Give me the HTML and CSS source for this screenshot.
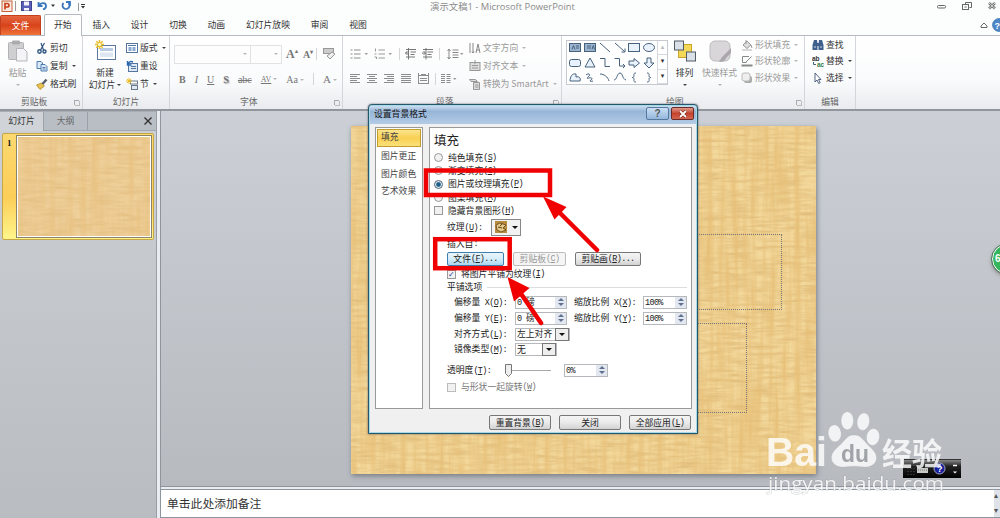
FILE: index.html
```html
<!DOCTYPE html>
<html lang="zh-CN">

<head>
    <meta charset="UTF-8">
    <meta name="viewport" content="width=device-width, initial-scale=1.0">
    <title>演示文稿1 - Microsoft PowerPoint</title>
    <link rel="stylesheet" href="styles.css">
</head>

<body>
    <div class="app">
        <header class="titlebar">
            <div class="quick-access">
                <svg width="86" height="14" viewBox="0 0 86 14">
                    <rect x="2" y="1" width="10" height="10.500" fill="#fbe9df" stroke="#c2623a" />
                    <path d="M5 9.500V3.500h2.200a1.700 1.700 0 0 1 0 3.500H5" fill="none" stroke="#c8401c" stroke-width="1.700" />
                    <path d="M15.500 1v10M78.500 3v8" stroke="#999" />
                    <rect x="21.500" y="1.500" width="10" height="9" fill="#5b5fb5" stroke="#3f4390" />
                    <path d="M24 1.500h5v4h-5zM24 8h5v2.500h-5z" fill="#f3f4fb" />
                    <path d="M38.500 2v4h4M39 5.500c2-3.500 7-3 7 .5 0 2-1.500 3-3 3.500" fill="none" stroke="#3a76bd" stroke-width="1.800" />
                    <path d="M51 4.500h4l-2 2.500zM81 6h4l-2 2.500z" fill="#333" />
                    <path d="M81 4.500h4" stroke="#333" />
                    <path d="M63.500 3a3.500 3.500 0 1 0 5 0M66 2h4v4" fill="none" stroke="#3a76bd" stroke-width="1.800" />
                </svg>
            </div>
            <div class="title">演示文稿1 - Microsoft PowerPoint</div>
            <div class="window-buttons">
                <svg width="64" height="14" viewBox="0 0 64 14" fill="none" stroke="#666">
                    <rect x="1.500" y="5.500" width="8" height="2.500" rx="1" />
                    <path d="M29.500 4.500v-2h6v5h-2" />
                    <rect x="26.500" y="4.500" width="6" height="5" />
                    <path d="M28.500 7h2" />
                    <path d="M53 3l6 5.500M59 3l-6 5.500" stroke-width="2.400" />
                    <path d="M53 3l6 5.500M59 3l-6 5.500" stroke="#fff" stroke-width=".8" />
                </svg>
            </div>
        </header>

        <nav class="tabs">
            <span class="tab file">文件</span>
            <span class="tab active">开始</span>
            <span class="tab">插入</span>
            <span class="tab">设计</span>
            <span class="tab">切换</span>
            <span class="tab">动画</span>
            <span class="tab">幻灯片放映</span>
            <span class="tab">审阅</span>
            <span class="tab">视图</span>
            <svg class="tab-help" width="24" height="18" viewBox="0 0 24 18">
                <path d="M2 10l3-3 3 3v1.500H2z" fill="#fff" stroke="#666" />
                <circle cx="20" cy="9" r="6.500" fill="#4c88c8" stroke="#2f659f" stroke-width=".6" />
                <text x="15.500" y="12.500" font-size="9" font-weight="bold" fill="#fff">?</text>
            </svg>
        </nav>

        <section class="ribbon">
            <div class="group clipboard">
                <div class="group-body">
                    <div class="big disabled">
                        <svg width="22" height="24" viewBox="0 0 22 24">
                            <rect x="1.500" y="3.500" width="15" height="17" rx="1" fill="#cfcfd1" stroke="#b3b3b6" />
                            <rect x="5" y="1.500" width="8" height="4" rx="1" fill="#aaabae" />
                            <path d="M9.500 9.500h7l3.500 3.500v9h-10.500z" fill="#f4f4f6" stroke="#b5b5b9" />
                        </svg>
                        <span>粘贴</span>
                        <i class="arrow"></i>
                    </div>
                    <div class="stack">
                        <div class="item">
                            <svg width="12" height="12" viewBox="0 0 12 12" fill="none" stroke="#2f5482">
                                <path d="M5 1l2.500 7M8.500 1L4.500 8" stroke-width="1.200" />
                                <circle cx="3.500" cy="9.500" r="1.700" stroke-width="1.400" />
                                <circle cx="8.500" cy="9.500" r="1.500" stroke-width="1.400" />
                            </svg>剪切
                        </div>
                        <div class="item">
                            <svg width="12" height="12" viewBox="0 0 12 12" fill="#dcebfa" stroke="#3f6ea5" stroke-width=".9">
                                <path d="M1 1.500h4l1.500 1.500v5.500H1z" />
                                <path d="M5 4.500h4l2 2v4.500H5z" />
                                <path d="M6.500 7.500h3M6.500 9h3" />
                            </svg>复制<i class="arrow"></i>
                        </div>
                        <div class="item">
                            <svg width="12" height="12" viewBox="0 0 12 12">
                                <path d="M.5 7l5-2 3 3L4 11.500z" fill="#eac24f" stroke="#a87c1d" stroke-width=".7" />
                                <path d="M6.500 6L10.500 1.500" stroke="#555e6b" stroke-width="2.400" />
                            </svg>格式刷
                        </div>
                    </div>
                </div>
                <div class="group-label">剪贴板<i class="launcher"></i></div>
            </div>

            <div class="group slides">
                <div class="group-body">
                    <div class="big">
                        <svg width="24" height="24" viewBox="0 0 24 24">
                            <rect x="4.500" y="6.500" width="18" height="14" fill="#fff" stroke="#5d79a3" />
                            <rect x="7" y="9" width="13" height="3" fill="#b9cbe2" />
                            <rect x="7" y="13.500" width="13" height="4.500" fill="#dde6f2" />
                            <path d="M6.500 1v9M2 5.500h9M3.300 2.300l6.400 6.400M9.700 2.300L3.300 8.700" stroke="#e9bd25" stroke-width="1.500" />
                            <circle cx="6.500" cy="5.500" r="1.600" fill="#fffbd6" />
                        </svg>
                        <span>新建</span>
                        <span class="second">幻灯片<i class="arrow"></i></span>
                    </div>
                    <div class="stack">
                        <div class="item">
                            <svg width="12" height="12" viewBox="0 0 12 12">
                                <rect x=".5" y="1.500" width="11" height="9" fill="#fff" stroke="#54759f" />
                                <path d="M2 3.500h8" stroke="#54759f" />
                                <path d="M2.500 5h3v4h-3zM6.500 5h3v4h-3z" fill="#8aa9d0" />
                            </svg>版式<i class="arrow"></i>
                        </div>
                        <div class="item">
                            <svg width="12" height="12" viewBox="0 0 12 12">
                                <rect x="2.500" y="3.500" width="9" height="8" fill="#dfe9f5" stroke="#54759f" />
                                <path d="M5 6.500h5M5 8.500h5" stroke="#54759f" />
                                <path d="M1.500 1v4h4M2 4c1-2.500 3-3 5-2" fill="none" stroke="#2768b0" stroke-width="1.400" />
                            </svg>重设
                        </div>
                        <div class="item">
                            <svg width="12" height="12" viewBox="0 0 12 12">
                                <rect x="4.500" y="3" width="7" height="3" fill="#fff" stroke="#6d7886" />
                                <rect x="5.500" y="7.500" width="6" height="4" fill="#dfe9f5" stroke="#6d7886" />
                                <path d="M3 0v6M0 3h6M1 1l4 4M5 1L1 5" stroke="#e9bd25" />
                            </svg>节<i class="arrow"></i>
                        </div>
                    </div>
                </div>
                <div class="group-label">幻灯片</div>
            </div>

            <div class="group font disabled">
                <div class="group-body rows">
                    <div class="tool-row">
                        <div class="combo family"><i class="arrow"></i></div>
                        <div class="combo size"><i class="arrow"></i></div>
                        <span class="glyph grow">A<sup>▴</sup></span>
                        <span class="glyph shrink">A<sup>▾</sup></span>
                        <i class="sep"></i>
                        <svg class="eraser" width="14" height="14" viewBox="0 0 14 14" fill="#eee" stroke="#999">
                            <rect x="1.500" y="1.500" width="10" height="5" fill="#ccc" />
                            <path d="M5 9l5-4 3 2-5 5z" />
                        </svg>
                    </div>
                    <div class="tool-row letters">
                        <b>B</b><em>I</em><u>U</u><b class="shadow">S</b><s>abc</s>
                        <span class="av">AV<i class="arrow"></i></span>
                        <span class="aa">Aa<i class="arrow"></i></span>
                        <i class="sep"></i>
                        <span class="fc">A<i class="arrow"></i></span>
                    </div>
                </div>
                <div class="group-label">字体<i class="launcher"></i></div>
            </div>

            <div class="group paragraph disabled">
                <div class="group-body">
                    <div class="rows">
                        <div class="tool-row icons">
                            <svg width="20" height="12" viewBox="0 0 20 12"><path d="M4 2h6.500M4 6h6.500M4 10h6.500M.5 2h2M.5 6h2M.5 10h2" stroke="#8d8d8d" stroke-width="1.200" /><path d="M14.500 5h3.500l-1.800 2z" fill="#999" /></svg>
                            <svg class="gap-a" width="20" height="12" viewBox="0 0 20 12"><path d="M4.500 2h6.500M4.500 6h6.500M4.500 10h6.500M1.500 .5v3M.5 6h2M.5 9h2v2" stroke="#999" fill="none" /><path d="M14.500 5h3.500l-1.800 2z" fill="#999" /></svg>
                            <i class="sep"></i>
                            <svg class="gap-b" width="12" height="12" viewBox="0 0 12 12"><path d="M1 1.500h10M5.500 4h5.500M5.500 6.500h4M1 9h9M3.500 0v11.500M4 5H.5M2.500 3l-2 2 2 2" stroke="#777" fill="none" /></svg>
                            <svg class="gap-b" width="12" height="12" viewBox="0 0 12 12"><path d="M1 1.500h10M5.500 4h5.500M5.500 6.500h4M1 9h9M4 0v11.500M0 5h3.500M1.500 3l2 2-2 2" stroke="#777" fill="none" /></svg>
                            <i class="sep gap-b"></i>
                            <svg class="gap-c" width="18" height="12" viewBox="0 0 18 12"><path d="M5.500 2h6M5.500 4.500h6M5.500 7h6M5.500 9.500h6M2 1v10M.5 3L2 1l1.500 2M.5 9L2 11l1.500-2" stroke="#888" fill="none" /><path d="M13 5h3.500l-1.800 2z" fill="#999" /></svg>
                        </div>
                        <div class="tool-row icons second-row">
                            <svg width="12" height="10" viewBox="0 0 12 10" stroke="#8d8d8d"><path d="M0 .5h10M0 2.500h7M0 4.500h10M0 6.500h7M0 8.500h10" /></svg>
                            <svg width="12" height="10" viewBox="0 0 12 10" stroke="#8d8d8d"><path d="M0 .5h10M2 2.500h6M0 4.500h10M2 6.500h6M0 8.500h10" /></svg>
                            <svg width="12" height="10" viewBox="0 0 12 10" stroke="#8d8d8d"><path d="M0 .5h10M3 2.500h7M0 4.500h10M3 6.500h7M0 8.500h10" /></svg>
                            <svg width="12" height="10" viewBox="0 0 12 10" stroke="#8d8d8d"><path d="M0 .5h10M0 2.500h10M0 4.500h10M0 6.500h10M0 8.500h10" /></svg>
                            <svg width="12" height="12" viewBox="0 0 12 12" stroke="#8d8d8d"><path d="M0 2.500h11M2 5.500h7M2 7.500h7M0 10.500h11M.5 0v11M10.500 0v11M3 1.500h5" /></svg>
                            <i class="sep"></i>
                            <svg width="18" height="10" viewBox="0 0 18 10" stroke="#8d8d8d"><path d="M0 .5h4M0 2.500h4M0 4.500h4M0 6.500h4M0 8.500h4M5.500 .5h4M5.500 2.500h4M5.500 4.500h4M5.500 6.500h4M5.500 8.500h4" /><path d="M12 4h3.500l-1.800 2z" fill="#999" stroke="none" /></svg>
                        </div>
                    </div>
                    <div class="stack">
                        <div class="item">
                            <svg width="12" height="12" viewBox="0 0 12 12" fill="none" stroke="#888"><path d="M1 1v10M4 1v10M7 11l2-9 2 9M7.500 8h3M3 9.500l1 1.500 1-1.500" /></svg>文字方向<i class="arrow"></i>
                        </div>
                        <div class="item">
                            <svg width="12" height="12" viewBox="0 0 12 12" fill="#ddd" stroke="#999"><rect x="1" y="2.500" width="10" height="8" /><path d="M3 5.500h6M3 8h6M6 0v4" /></svg>对齐文本<i class="arrow"></i>
                        </div>
                        <div class="item">
                            <svg width="12" height="12" viewBox="0 0 12 12" fill="#ddd" stroke="#999"><path d="M.5 1.500h6l2 2H2z" /><path d="M4.500 4.500h6v7h-6zM6 7h3.500M6 9h3.500" /></svg>转换为 SmartArt<i class="arrow"></i>
                        </div>
                    </div>
                </div>
                <div class="group-label">段落<i class="launcher"></i></div>
            </div>

            <div class="group drawing">
                <div class="group-body">
                    <div class="gallery">
                        <svg width="90" height="43" viewBox="0 0 90 43" fill="#e9f2fa" stroke="#47627f">
                            <rect x="2.500" y="2.500" width="11" height="8" fill="#9db4cf" />
                            <path d="M5 8.500l1.500-4 1.500 4M9 5h3M9 7h3" fill="none" />
                            <rect x="17.500" y="2.500" width="11" height="8" fill="#9db4cf" />
                            <path d="M20 5h4M20 7h4M25 8.500l1.300-4 1.300 4" fill="none" />
                            <path d="M33 2l10 9M48 2l9.500 8.500M58 7.500v3.500h-3.500" fill="none" />
                            <rect x="61.500" y="2.500" width="11" height="8" />
                            <ellipse cx="82" cy="6.500" rx="5.500" ry="4" />
                            <rect x="2.500" y="18.500" width="11" height="7" rx="2" />
                            <path d="M23 17l5 9H18z" />
                            <path d="M33 17.500h5v8h5M47.500 17.500h5v7.500h5M56 23l2 2-2 2" fill="none" />
                            <path d="M62 20h5v-2.500l5.500 4.500-5.500 4.500V24h-5z" />
                            <path d="M80 17h4v5h3l-5 5-5-5h3z" />
                            <path d="M3 40c0-4 2-8 6-7v3c3-1 5 1 4 4z" />
                            <path d="M19 34c2-2 5-1 3 1s-3 3 0 2 4 1 2 2-1 2 2 1M33 33c4 0 8 3 9 7M47 39c3 0 3-7 6-7s2 6 6 7M69 32c-3 0-2 2-2 3s-1 1.500-2 1.500c1 0 2 .5 2 1.500s-1 3 2 3M80 32c3 0 2 2 2 3s1 1.500 2 1.500c-1 0-2 .5-2 1.500s1 3-2 3" fill="none" />
                        </svg>
                        <div class="gallery-scroll">
                            <span class="off">▴</span>
                            <span>▾</span>
                            <span>▾</span>
                        </div>
                    </div>
                    <div class="big arrange">
                        <svg width="24" height="24" viewBox="0 0 24 24" stroke-width="1">
                            <rect x="5.500" y="5.500" width="13" height="13" fill="#f4d858" stroke="#c9a32a" />
                            <rect x="1.500" y="2" width="9" height="9" fill="#d9e0e8" stroke="#515b66" />
                            <rect x="13.500" y="13" width="9" height="9" fill="#d9e0e8" stroke="#515b66" />
                        </svg>
                        <span>排列</span>
                        <i class="arrow"></i>
                    </div>
                    <div class="big quick disabled">
                        <svg width="24" height="24" viewBox="0 0 24 24">
                            <rect x="2" y="2" width="20" height="20" rx="5" fill="#d9d6da" stroke="#bdb9be" />
                            <path d="M23 9l-9 9-3 5c4 0 6-1 7-4l5-5z" fill="#aaa6ab" />
                        </svg>
                        <span>快速样式</span>
                        <i class="arrow"></i>
                    </div>
                    <div class="stack tight disabled">
                        <div class="item">
                            <svg width="12" height="12" viewBox="0 0 12 12" fill="#ddd" stroke="#999"><path d="M2 6l4-4 4 4-4 3.500zM5 1v4" /><path d="M10 6l1 3" /><path d="M1 11h10" stroke="#ccc" stroke-width="1.500" /></svg>形状填充<i class="arrow"></i>
                        </div>
                        <div class="item">
                            <svg width="12" height="12" viewBox="0 0 12 12" fill="none" stroke="#888"><path d="M8 1.500H1.500v6h4M5 7l5.500-5.500" /><path d="M.5 10.500h11" stroke-width="2" /></svg>形状轮廓<i class="arrow"></i>
                        </div>
                        <div class="item">
                            <svg width="12" height="12" viewBox="0 0 12 12"><rect x="3" y="4" width="8" height="7" rx="2" fill="#aaa" /><rect x="1" y="1" width="8" height="8" rx="2" fill="#eee" stroke="#bbb" /></svg>形状效果<i class="arrow"></i>
                        </div>
                    </div>
                </div>
                <div class="group-label">绘图<i class="launcher"></i></div>
            </div>

            <div class="group editing">
                <div class="group-body">
                    <div class="stack tight">
                        <div class="item">
                            <svg width="12" height="12" viewBox="0 0 12 12" fill="#3f5f8c"><path d="M2 1h3l.5 4v6H.5V6zM7 1h3l1.500 5v5h-5V5z" /><path d="M5 4h2v3H5z" /><path d="M2 8h2M8 8h2" stroke="#cfdced" /></svg>查找
                        </div>
                        <div class="item">
                            <svg width="12" height="12" viewBox="0 0 12 12"><text x="0" y="5.500" font-size="6.500" font-weight="bold" fill="#333">ab</text><text x="5" y="11.500" font-size="6.500" font-weight="bold" fill="#34804a">ac</text><path d="M1.500 7v2.500H4" fill="none" stroke="#47627f" /></svg>替换<i class="arrow"></i>
                        </div>
                        <div class="item">
                            <svg width="12" height="12" viewBox="0 0 12 12"><path d="M3 1v9l2-2 1.700 3.500 1.500-.8L6.500 7.500H9z" fill="#fff" stroke="#3e5576" stroke-width=".9" /></svg>选择<i class="arrow"></i>
                        </div>
                    </div>
                </div>
                <div class="group-label">编辑</div>
            </div>
        </section>

        <main class="workspace">
            <aside class="sidebar">
                <div class="side-tabs">
                    <span class="side-tab current">幻灯片</span>
                    <span class="side-tab">大纲</span>
                    <svg class="side-close" width="10" height="10" viewBox="0 0 10 10"><path d="M1.500 1.500l7 7M8.500 1.500l-7 7" stroke="#333" stroke-width="1.400" /></svg>
                </div>
                <div class="thumb">
                    <b class="thumb-number">1</b>
                    <div class="thumb-slide">
                        <svg width="100%" height="100%">
                            <rect width="100%" height="100%" filter="url(#weft)" />
                            <rect width="100%" height="100%" filter="url(#warp)" />
                        </svg>
                    </div>
                </div>
            </aside>
            <div class="editor">
                <div class="canvas">
                    <div class="slide">
                        <svg class="fabric" width="465" height="348">
                            <defs>
                                <filter id="weft" x="0" y="0" width="100%" height="100%" color-interpolation-filters="sRGB">
                                    <feTurbulence type="fractalNoise" baseFrequency="0.04 0.3" numOctaves="3" seed="4" />
                                    <feColorMatrix values="0 0 0 0 .80  0 0 0 0 .62  0 0 0 0 .34  1.800 0 0 0 -.62" />
                                </filter>
                                <filter id="warp" x="0" y="0" width="100%" height="100%" color-interpolation-filters="sRGB">
                                    <feTurbulence type="fractalNoise" baseFrequency="0.16 0.012" numOctaves="3" seed="9" />
                                    <feColorMatrix values="0 0 0 0 .86  0 0 0 0 .66  0 0 0 0 .34  2 0 0 0 -.72" />
                                </filter>
                            </defs>
                            <rect width="465" height="348" filter="url(#weft)" />
                            <rect width="465" height="348" filter="url(#warp)" />
                        </svg>
                        <div class="placeholder heading"></div>
                        <div class="placeholder subtitle"></div>
                    </div>
                </div>
                <div class="notes">
                    <span>单击此处添加备注</span>
                    <div class="notes-scroll"><i>▴</i><i>▾</i></div>
                </div>
            </div>
        </main>

        <div class="dialog">
            <div class="dialog-title">
                <span>设置背景格式</span>
                <div class="dialog-buttons">
                    <b class="help">?</b>
                    <b class="close">
                        <svg width="10" height="8" viewBox="0 0 10 8"><path d="M2 1l6 6M8 1L2 7" stroke="#6d2018" stroke-width="3" /><path d="M2 1l6 6M8 1L2 7" stroke="#fff" stroke-width="1.800" /></svg>
                    </b>
                </div>
            </div>
            <div class="dialog-body">
                <ul class="pages">
                    <li class="selected">填充</li>
                    <li>图片更正</li>
                    <li>图片颜色</li>
                    <li>艺术效果</li>
                </ul>
                <div class="panel">
                    <h2>填充</h2>
                    <div class="option"><i class="radio"></i>纯色填充<kbd>(<u>S</u>)</kbd></div>
                    <div class="option"><i class="radio"></i>渐变填充<kbd>(<u>G</u>)</kbd></div>
                    <div class="option"><i class="radio on"></i>图片或纹理填充<kbd>(<u>P</u>)</kbd></div>
                    <div class="option"><i class="radio"></i>图案填充<kbd>(<u>A</u>)</kbd></div>
                    <div class="option"><i class="check"></i>隐藏背景图形<kbd>(<u>H</u>)</kbd></div>
                    <div class="line texture">
                        <span>纹理<kbd>(<u>U</u>):</kbd></span>
                        <div class="texture-button">
                            <svg width="12" height="12" viewBox="0 0 12 12"><rect width="12" height="12" fill="#b98b3f" /><path d="M1 4l4-2 6 2-3 3 3 2-5 2-4-2z" fill="#e6c887" stroke="#5b431c" stroke-width=".8" /><path d="M3 6l4 1M7 3L5 5" stroke="#5b431c" /></svg>
                            <i class="arrow"></i>
                        </div>
                    </div>
                    <div class="line insert">插入自<kbd>:</kbd></div>
                    <div class="line sources">
                        <span class="button focus">文件<kbd>(<u>F</u>)...</kbd></span>
                        <span class="button off">剪贴板<kbd>(<u>C</u>)</kbd></span>
                        <span class="button">剪贴画<kbd>(<u>R</u>)...</kbd></span>
                    </div>
                    <div class="line tile"><i class="check on"></i>将图片平铺为纹理<kbd>(<u>I</u>)</kbd></div>
                    <div class="line legend">平铺选项<hr></div>
                    <div class="line offset">
                        <label>偏移量<kbd> X(<u>O</u>):</kbd></label>
                        <div class="spin"><span><kbd>0 </kbd>磅</span><i></i></div>
                        <label class="scale">缩放比例<kbd> X(<u>X</u>):</kbd></label>
                        <div class="spin small"><kbd>100%</kbd><i></i></div>
                    </div>
                    <div class="line offset">
                        <label>偏移量<kbd> Y(<u>E</u>):</kbd></label>
                        <div class="spin"><span><kbd>0 </kbd>磅</span><i></i></div>
                        <label class="scale">缩放比例<kbd> Y(<u>Y</u>):</kbd></label>
                        <div class="spin small"><kbd>100%</kbd><i></i></div>
                    </div>
                    <div class="line offset">
                        <label>对齐方式<kbd>(<u>L</u>):</kbd></label>
                        <div class="select wide">左上对齐<i></i></div>
                    </div>
                    <div class="line offset">
                        <label>镜像类型<kbd>(<u>M</u>):</kbd></label>
                        <div class="select">无<i></i></div>
                    </div>
                    <div class="line opacity">
                        <label>透明度<kbd>(<u>T</u>):</kbd></label>
                        <svg class="slider" width="49" height="16" viewBox="0 0 49 16"><path d="M9 7.500h39" stroke="#a9a9a9" /><path d="M2.500 1.500h6v9l-3 3-3-3z" fill="#eee" stroke="#777" /></svg>
                        <div class="spin small"><kbd>0%</kbd><i></i></div>
                    </div>
                    <div class="line rotate"><i class="check"></i>与形状一起旋转<kbd>(<u>W</u>)</kbd></div>
                </div>
            </div>
            <div class="dialog-footer">
                <span class="button">重置背景<kbd>(<u>B</u>)</kbd></span>
                <span class="button">关闭</span>
                <span class="button">全部应用<kbd>(<u>L</u>)</kbd></span>
            </div>
        </div>

        <div class="language-bar">
            <svg width="58" height="18" viewBox="0 0 58 18">
                <path d="M5 5v10M8 5v10M11 5v10" stroke="#555" stroke-dasharray="1 2" />
                <rect x="14" y="8" width="11" height="5" fill="#c9cbc8" />
                <path d="M15 10h9" stroke="#777" stroke-dasharray="1 1" />
                <circle cx="36.500" cy="8.500" r="5.500" fill="#18209b" stroke="#aab" />
                <text x="34" y="12" font-size="9" font-weight="bold" fill="#fff">?</text>
                <path d="M50 5.500h4" stroke="#fff" stroke-width="1.500" />
                <path d="M50 11.500h4l-2 2z" fill="#fff" />
            </svg>
        </div>

        <div class="badge">6</div>

        <svg class="watermark" width="190" height="110" viewBox="0 0 190 110">
            <g fill="#fff" stroke="#aaa" stroke-opacity=".4" stroke-width=".7">
                <text class="brand" x="3" y="76" textLength="61" lengthAdjust="spacingAndGlyphs">Bai</text>
                <ellipse cx="71.700" cy="43.300" rx="6.500" ry="8.500" transform="rotate(-8 71.700 43.300)" />
                <ellipse cx="84.300" cy="30.700" rx="6.200" ry="9" />
                <ellipse cx="100.300" cy="31.700" rx="6.200" ry="8.800" transform="rotate(10 100.300 31.700)" />
                <ellipse cx="110" cy="47" rx="6.500" ry="8.500" transform="rotate(10 110 47)" />
                <path d="M91 45c7 0 9 5 14 10s9 8 8.500 14c-1 6-7 8.500-13 8-6-1-13-1-19 0-6 .5-12-2-13-8-.5-6 3-9 8.500-14s7-10 14-10z" />
                <text class="cn" x="119" y="75" textLength="60" lengthAdjust="spacingAndGlyphs">经验</text>
                <text class="url" x="5" y="100" textLength="176" lengthAdjust="spacingAndGlyphs">jingyan.baidu.com</text>
            </g>
            <text class="du" x="78" y="72" textLength="28" lengthAdjust="spacingAndGlyphs">du</text>
        </svg>

        <!-- red marks over the dialog -->
        <svg class="marks" width="1000" height="518" viewBox="0 0 1000 518">
            <g fill="none" stroke="#f00000" stroke-width="4.500">
                <rect x="426" y="170.500" width="124" height="24.500" />
                <rect x="435.200" y="239.200" width="74.500" height="29" />
                <path d="M597 250L554 207M541 323L515 285" stroke-linecap="round" />
            </g>
            <path d="M543 196.500l23.500 10.500-12 12.500zM507.500 277l22 11-15.500 13.500z" fill="#f00000" />
        </svg>
    </div>
</body>

</html>
```

FILE: styles.css
```css
body {
    margin: 0;
    font-family: "Noto Sans CJK SC", "Liberation Sans", sans-serif;
    font-size: 8.8px;
    line-height: 12px;
    color: #333;
}

svg {
    display: block;
    flex: none;
}

svg text {
    font-family: "Liberation Sans", sans-serif;
    stroke: none;
}

.app {
    position: relative;
    display: flex;
    flex-direction: column;
    width: 1000px;
    height: 518px;
    overflow: hidden;
    background: #fcfdfd;
    white-space: nowrap;
}

/* title bar */
.titlebar {
    display: flex;
    align-items: flex-start;
    height: 14px;
}

.quick-access {
    width: 430px;
}

.title {
    width: 506px;
    font-family: "Open Sans", "Noto Sans CJK SC", sans-serif;
    font-size: 9.400px;
    line-height: 13px;
    color: #8b8b8b;
}

/* ribbon tabs */
.tabs {
    display: flex;
    height: 21px;
    border-bottom: 1px solid #b5bac0;
    line-height: 21px;
}

.tab {
    padding: 0 10.400px;
}

.tab.file {
    width: 41px;
    padding: 0;
    margin: 1px 3px 0 0;
    box-sizing: border-box;
    border: 1px solid #c4401c;
    border-bottom: 0;
    border-radius: 2px 2px 0 0;
    background: linear-gradient(#e4663f, #d8431b 50%, #f0753a);
    color: #fff;
    line-height: 19px;
    text-align: center;
}

.tab.active {
    box-sizing: border-box;
    width: 38px;
    height: 22px;
    padding: 0 0 0 9px;
    border: 1px solid #b5bac0;
    border-bottom: 0;
    border-radius: 2px 2px 0 0;
    background: #fff;
    line-height: 20px;
}

.tab-help {
    margin: 2px -3px 0 auto;
}

/* ribbon */
.ribbon {
    display: flex;
    height: 74px;
    background: linear-gradient(#fff, #fafbfc 60%, #e9ebee);
    border-bottom: 2px solid #91969d;
}

.group {
    display: flex;
    flex-direction: column;
    box-sizing: border-box;
    border-right: 1px solid #d2d6da;
}

.clipboard { width: 83px; }
.slides { width: 87px; }
.font { width: 173px; }
.paragraph { width: 219px; }
.drawing { width: 243px; }
.editing { width: 51px; }

.group-body {
    display: flex;
    height: 60px;
}

.group-label {
    display: flex;
    justify-content: center;
    height: 13px;
    color: #666;
}

.launcher {
    width: 4px;
    height: 4px;
    margin: 4px 3px 0 auto;
    border: 1px solid #aaa;
    border-width: 1px 0 0 1px;
    box-shadow: 1px 1px 0 #bbb;
}

.clipboard .group-label { padding-left: 21px; }
.font .group-label { padding-left: 70px; }
.paragraph .group-label { padding-left: 93px; }
.drawing .group-label { padding-left: 104px; }

.arrow {
    display: inline-block;
    flex: none;
    border: 2px solid transparent;
    border-top-color: #444;
    border-bottom: 0;
}

.disabled {
    color: #9a9a9a;
}

.disabled .arrow {
    border-top-color: #b5b5b5;
}

.big {
    display: flex;
    flex-direction: column;
    align-items: center;
    width: 35px;
    padding-top: 3px;
}

.big > span {
    margin-top: 4px;
}

.big > .arrow {
    margin-top: 5px;
}

.big .second {
    margin-top: 0;
}

.second .arrow {
    margin: 0 0 2px 2px;
}

.slides .big {
    width: 42px;
    padding-left: 1px;
}

.stack {
    padding-top: 3px;
}

.item {
    display: flex;
    align-items: center;
    height: 18.200px;
}

.item svg {
    margin-right: 2px;
}

.item .arrow {
    margin-left: 4px;
}

.tight .item {
    height: 16.300px;
}

.tight {
    padding-top: 1px;
}

.clipboard .stack { padding-left: 1px; }

/* font group */
.rows {
    flex-direction: column;
}

.tool-row {
    display: flex;
    align-items: center;
    height: 20px;
    margin-top: 8px;
}

.tool-row + .tool-row {
    margin-top: 5px;
}

.font .tool-row {
    padding-left: 4px;
}

.combo {
    display: flex;
    align-items: center;
    justify-content: flex-end;
    box-sizing: border-box;
    height: 19px;
    padding-right: 3px;
    border: 1px solid #e0e2e4;
    background: #fdfdfd;
}

.combo.family { width: 77px; }
.combo.size { width: 31px; border-left: 0; }

.glyph {
    width: 17px;
    padding-left: 4px;
    box-sizing: border-box;
    font: bold 12px "Liberation Serif", serif;
    color: #777;
}

.glyph.shrink {
    font-size: 10px;
}

.glyph sup {
    font-size: 6px;
    line-height: 0;
}

.sep {
    width: 1px;
    height: 12px;
    background: #d5d5d5;
}

.eraser {
    margin-left: 5px;
}

.letters {
    justify-content: space-between;
    padding-right: 5px;
    font: 10px "Liberation Serif", serif;
    color: #777;
}

.font .letters {
    padding-left: 9px;
}

.letters .arrow {
    margin: 0 0 2px 2px;
}

.shadow {
    text-shadow: 1px 1px 1px #999;
}

.av {
    font-size: 8px;
    text-decoration: underline;
}

.fc {
    font-size: 11px;
}

/* paragraph group */
.paragraph .rows {
    width: 126px;
    padding-left: 7px;
    box-sizing: border-box;
}

.gap-a { margin: 0 5px 0 4px; }
.gap-b { margin-left: 5px; }
.gap-c { margin-left: 7px; }

.second-row {
    gap: 5px;
}

/* drawing group */
.gallery {
    display: flex;
    box-sizing: border-box;
    width: 102px;
    height: 45px;
    margin: 4px 0 0 4px;
    border: 1px solid #c6cad0;
    background: #fff;
}

.gallery-scroll {
    display: flex;
    flex-direction: column;
    width: 10px;
    border-left: 1px solid #d5d8dc;
}

.gallery-scroll span {
    flex: 1;
    border-bottom: 1px solid #d5d8dc;
    font: 7px/13px "DejaVu Sans", sans-serif;
    text-align: center;
}

.gallery-scroll .off {
    color: #bbb;
}

.big.quick {
    width: 37px;
}

.drawing .stack {
    padding-left: 3px;
}

.drawing .big.arrange {
    width: 33px;
}

.editing .stack {
    padding-left: 7px;
}

/* workspace */
.workspace {
    display: flex;
    flex: 1;
}

.sidebar {
    width: 156px;
    border-right: 1px solid #999fa6;
    background: linear-gradient(#cdd1d6, #b9bdc2);
}

.side-tabs {
    display: flex;
    align-items: center;
    height: 18px;
    border-bottom: 1px solid #a2a7ae;
    border-top: 1px solid #a9adb3;
    background: #b9bec5;
    color: #666;
    line-height: 18px;
}

.side-tab {
    width: 43px;
    border-right: 1px solid #9ba1a9;
    text-align: center;
}

.side-tab.current {
    height: 19px;
    background: #d0d4d9;
    color: #333;
}

.side-close {
    margin: 0 3px 0 auto;
}

.thumb {
    display: flex;
    box-sizing: border-box;
    width: 152px;
    height: 107px;
    margin: 2px 0 0 2px;
    padding: 2px 2px 2px 4px;
    border: 1px solid #c8a846;
    border-radius: 2px;
    background: linear-gradient(#fcd96f, #fccd59 60%, #fff58a);
}

.thumb-number {
    width: 10px;
    font: bold 9px/14px "Liberation Serif", serif;
    color: #222;
}

.thumb-slide {
    flex: 1;
    border: 1px solid #fff;
    outline: 1px solid #8b8366;
    background: #efd09a;
}

.thumb-slide svg {
    opacity: .35;
}

.editor {
    display: flex;
    flex: 1;
    flex-direction: column;
    margin-left: 3px;
    border-left: 1px solid #8f959c;
    box-shadow: -3px 0 0 #e9edf2;
}

.canvas {
    box-sizing: border-box;
    height: 376px;
    padding: 15px 0 0 190px;
    border-bottom: 1px solid #8f959c;
    background: linear-gradient(#ccd0d6, #b7bbc0);
}

.slide {
    position: relative;
    width: 465px;
    height: 348px;
    background: #f3d89b;
    box-shadow: 1px 2px 5px #777c84;
}

.fabric {
    opacity: .5;
}

.placeholder {
    position: absolute;
    border: 1px dotted #777;
}

.placeholder.heading {
    left: 34px;
    top: 108px;
    width: 395px;
    height: 74px;
}

.placeholder.subtitle {
    left: 69px;
    top: 197px;
    width: 325px;
    height: 88px;
}

.notes {
    display: flex;
    justify-content: space-between;
    height: 27px;
    margin-top: 2px;
    border-top: 1px solid #8f959c;
    border-bottom: 1px solid #8f959c;
    background: #fff;
    box-shadow: 0 -2px 0 #e9edf2;
    font-size: 11.800px;
    line-height: 25px;
}

.notes > span {
    padding-left: 6px;
}

.notes-scroll {
    display: flex;
    flex-direction: column;
    justify-content: space-between;
    width: 6px;
    background: #dfe3e8;
    font: 8px/12px "DejaVu Sans", sans-serif;
    color: #555;
}

/* format background dialog */
.dialog {
    position: absolute;
    left: 368px;
    top: 104px;
    display: flex;
    flex-direction: column;
    box-sizing: border-box;
    width: 330px;
    height: 330px;
    border: 1px solid #27566b;
    border-radius: 4px 4px 0 0;
    box-shadow: inset 0 0 0 1px #a5dbe6, 0 0 2px #556;
    background: #f0f0f0;
    color: #222;
}

kbd {
    font: 8.500px/12px "Liberation Mono", monospace;
    letter-spacing: -.65px;
    white-space: pre;
}

.dialog-title {
    display: flex;
    justify-content: space-between;
    height: 18px;
    margin: 1px 1px 0;
    padding-left: 4px;
    border-radius: 3px 3px 0 0;
    background: linear-gradient(#cbdcf0, #97b5d7 30%, #b2cbe7);
    line-height: 16px;
    color: #111;
}

.dialog-buttons {
    display: flex;
    gap: 2px;
    padding: 1px 2px 0 0;
}

.dialog-buttons b {
    display: flex;
    align-items: center;
    justify-content: center;
    box-sizing: border-box;
    width: 23px;
    height: 13px;
    border: 1px solid #55789c;
    border-radius: 2px;
    background: linear-gradient(#cbdff4, #94b7dc);
    font: bold 10px "Liberation Sans", sans-serif;
    color: #555;
}

.dialog-buttons .close {
    border-color: #6b2a25;
    background: linear-gradient(#e09a8b, #c4432f 50%, #d36451);
}

.dialog-body {
    display: flex;
    gap: 6px;
    height: 282px;
    padding: 3px 0 0 6px;
}

.pages {
    box-sizing: border-box;
    width: 48px;
    height: 282px;
    margin: 0;
    padding: 1px;
    border: 1px solid #999;
    background: #fff;
    list-style: none;
}

.pages li {
    height: 17.500px;
    padding-left: 4px;
    line-height: 16px;
    color: #444;
}

.pages .selected {
    height: 16px;
    margin-bottom: 1px;
    border: 1px solid #c19c2f;
    background: linear-gradient(#fbe58f, #f8cf52 50%, #fbe17a);
    padding-left: 3px;
    line-height: 14px;
}

.panel {
    box-sizing: border-box;
    width: 263px;
    height: 282px;
    padding-left: 4px;
    border: 1px solid #999;
    background: #fff;
}

.panel h2 {
    margin: 0;
    height: 23px;
    font-size: 12.500px;
    font-weight: normal;
    line-height: 23px;
}

.option,
.line {
    display: flex;
    align-items: center;
}

.option {
    height: 13.300px;
}

.radio,
.check {
    box-sizing: border-box;
    width: 9px;
    height: 9px;
    margin-right: 5px;
    border: 1px solid #999;
    background: #f1f1f1;
}

.radio {
    border-radius: 50%;
}

.radio.on {
    border-color: #567;
    background: radial-gradient(#1d5d86 35%, #dbe9f2 60%);
}

.check.on::after {
    content: "✓";
    display: block;
    font: bold 8px/7px "DejaVu Sans", sans-serif;
    color: #2b3f8f;
}

.line {
    padding-left: 13px;
}

.texture {
    height: 20px;
}

.texture-button {
    display: flex;
    align-items: center;
    gap: 5px;
    box-sizing: border-box;
    width: 30px;
    height: 17px;
    margin-left: 9px;
    padding-left: 3px;
    border: 1px solid #888;
    background: #f2f2f2;
}

.texture-button .arrow {
    border-width: 3px 3px 0;
    border-top-color: #111;
}

.insert {
    height: 13px;
}

.sources {
    gap: 8px;
    height: 17px;
}

.button {
    display: flex;
    align-items: center;
    justify-content: center;
    box-sizing: border-box;
    width: 67px;
    height: 14px;
    border: 1px solid #777;
    border-radius: 2px;
    background: linear-gradient(#f5f5f5, #eaeaea 50%, #d2d2d2);
}

.sources .button {
    width: 66px;
    margin-left: 1px;
}

.sources .focus {
    width: 57px;
    margin-left: 0;
    border-color: #3c7fb1;
    background: linear-gradient(#eaf5fc, #d6edfa 50%, #a9d6ef);
}

.sources .off {
    width: 53px;
    border-color: #bbb;
    background: #f5f5f5;
    color: #999;
}

.tile {
    height: 14px;
}

.legend {
    height: 12px;
    margin-bottom: 1.500px;
}

.legend hr {
    flex: 1;
    margin: 0 4px 0 5px;
    border: 0;
    border-top: 1px solid #ddd;
}

.offset {
    height: 15.700px;
    padding-left: 20px;
}

.offset label {
    width: 61px;
}

.offset .scale {
    width: 69px;
    margin-left: 7px;
}

.spin,
.select {
    display: flex;
    align-items: center;
    justify-content: space-between;
    box-sizing: border-box;
    width: 52px;
    height: 13px;
    padding-left: 1px;
    border: 1px solid #b5b8bd;
    background: #fff;
}

.spin.small {
    width: 44px;
}

.spin i {
    width: 11px;
    height: 11px;
    background: #e3e8f0;
}

.spin i::before,
.spin i::after {
    content: "";
    display: block;
    width: 0;
    margin: 1px auto 0;
    border: 3px solid transparent;
    border-top: 0;
    border-bottom: 3px solid #5f7091;
}

.spin i::after {
    margin-top: 2px;
    border-top: 3px solid #5f7091;
    border-bottom: 0;
}

.select {
    width: 42px;
}

.select.wide {
    width: 55px;
}

.select i {
    display: flex;
    align-items: center;
    justify-content: center;
    width: 12px;
    height: 11px;
    border: 1px solid #777;
    background: #eee;
}

.select i::after {
    content: "";
    border: 3px solid transparent;
    border-top-color: #111;
    border-bottom: 0;
}

.opacity {
    height: 20px;
    padding-top: 3px;
}

.opacity label {
    width: 56px;
}

.slider {
    margin-right: 12px;
}

.rotate {
    height: 13px;
    color: #777;
}

.rotate .check {
    border-color: #bbb;
}

.dialog-footer {
    display: flex;
    justify-content: flex-end;
    gap: 8px;
    padding: 6px 6px 0 0;
}

.dialog-footer .button {
    width: 62px;
    height: 15px;
}

/* things floating over the window */
.language-bar {
    position: absolute;
    left: 903px;
    top: 459px;
    border-top: 1px solid #333;
    background: linear-gradient(#888, #222 35%, #000);
}

.badge {
    position: absolute;
    left: 992px;
    top: 244px;
    width: 28px;
    height: 28px;
    border: 1px solid #fff;
    border-radius: 50%;
    outline: 1px solid #4b7a5c;
    background: #35b65c;
    box-shadow: 0 2px 4px #777;
    font: bold 10px/28px "Liberation Sans", sans-serif;
    color: #fff;
    text-indent: 2px;
}

.watermark {
    position: absolute;
    left: 763px;
    top: 390px;
    opacity: .82;
    overflow: visible;
}

.watermark .brand {
    font-size: 41px;
    font-weight: bold;
}

.watermark .cn {
    font-family: "Noto Sans CJK SC", sans-serif;
    font-size: 31px;
    font-weight: bold;
}

.watermark .url {
    font-family: "Open Sans", sans-serif;
    font-size: 19px;
    stroke: #8f9499;
    stroke-opacity: .5;
    stroke-width: 1px;
    paint-order: stroke;
}

.watermark .du {
    font-size: 23px;
    font-weight: bold;
    fill: #9b9fa4;
}

.marks {
    position: absolute;
    left: 0;
    top: 0;
}
```
